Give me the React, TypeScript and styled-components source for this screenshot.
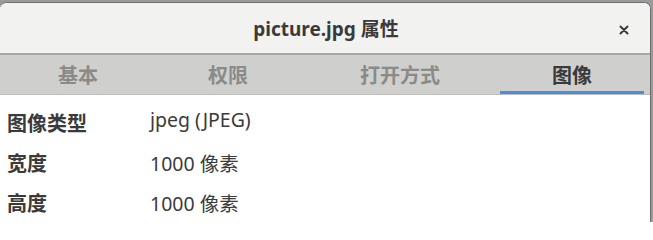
import styled, { createGlobalStyle } from 'styled-components';

const GlobalStyle = createGlobalStyle`
  html {
    background: #ffffff;
  }
  body {
    margin: 0;
    padding: 0;
    height: 222px;
    background: #9a9a9a;
    overflow: hidden;
    font-family: "Noto Sans", "Noto Sans CJK SC", sans-serif;
    color: #3c3c3c;
  }
`;

const Window = styled.div`
  margin-top: 2px;
  width: 650px;
  height: 219px;
  border-top: 1px solid #707070;
  border-right: 1px solid #6c6c6c;
  border-radius: 7px 7px 0 0;
  background: #ffffff;
  overflow: hidden;
  display: flex;
  flex-direction: column;
`;

const TitleBar = styled.header`
  height: 50px;
  flex: none;
  background: #f2f2f1;
  border-bottom: 2px solid #a8a8a6;
  display: flex;
  align-items: center;
  justify-content: center;
  position: relative;
`;

const Title = styled.h1`
  margin: 0;
  font-size: 19px;
  font-weight: 700;
  color: #3a3a3a;
  line-height: 1;
  padding-top: 2px;
  padding-left: 2px;
`;

const CloseButton = styled.button`
  position: absolute;
  right: 16px;
  top: 17px;
  width: 20px;
  height: 20px;
  padding: 0;
  border: 0;
  background: transparent;
  display: flex;
  align-items: center;
  justify-content: center;
  color: #3a3a3a;
`;

const TabBar = styled.nav`
  height: 39px;
  flex: none;
  background: #cfcfcd;
  border-bottom: 1px solid #bdbdbb;
  display: flex;
  padding-left: 4px;
`;

const Tab = styled.div<{ $active?: boolean; $width: number; $gap?: number }>`
  width: ${(p) => p.$width}px;
  margin-left: ${(p) => p.$gap ?? 0}px;
  box-sizing: border-box;
  display: flex;
  align-items: center;
  justify-content: center;
  font-family: "Noto Sans CJK SC", sans-serif;
  font-size: 20px;
  font-weight: 700;
  color: ${(p) => (p.$active ? '#3a3a3a' : '#8a8a88')};
  border-bottom: 3px solid ${(p) => (p.$active ? '#4a90d9' : 'transparent')};
  padding-top: 3px;
`;

const Content = styled.section`
  padding: 7px 0 0 7px;
  display: grid;
  grid-template-columns: 143px 1fr;
  grid-auto-rows: 40px;
  align-items: center;
`;

const Label = styled.div`
  font-family: "Noto Sans CJK SC", sans-serif;
  font-size: 20px;
  font-weight: 700;
  color: #3a3a3a;
`;

const Value = styled.div<{ $lift?: number }>`
  font-size: 19.5px;
  color: #3a3a3a;
  position: relative;
  top: ${(p) => -(p.$lift ?? 0)}px;
`;

const tabs = [
  { label: '基本', width: 148 },
  { label: '权限', width: 152 },
  { label: '打开方式', width: 192 },
  { label: '图像', width: 144, gap: 4, active: true },
];

const rows = [
  { label: '图像类型', value: 'jpeg (JPEG)', lift: 3 },
  { label: '宽度', value: '1000 像素', lift: 0 },
  { label: '高度', value: '1000 像素', lift: 0 },
];

export default function App() {
  return (
    <>
      <GlobalStyle />
      <Window>
        <TitleBar>
          <Title>picture.jpg 属性</Title>
          <CloseButton aria-label="关闭">
            <svg width="10" height="10" viewBox="0 0 10 10">
              <path d="M1.5 1.5 L8.5 8.5 M8.5 1.5 L1.5 8.5" stroke="currentColor" strokeWidth="2" strokeLinecap="round" />
            </svg>
          </CloseButton>
        </TitleBar>
        <TabBar>
          {tabs.map((t) => (
            <Tab key={t.label} $width={t.width} $gap={t.gap} $active={t.active}>
              {t.label}
            </Tab>
          ))}
        </TabBar>
        <Content>
          {rows.map((r) => [
            <Label key={r.label + 'l'}>{r.label}</Label>,
            <Value key={r.label + 'v'} $lift={r.lift}>
              {r.value}
            </Value>,
          ])}
        </Content>
      </Window>
    </>
  );
}
